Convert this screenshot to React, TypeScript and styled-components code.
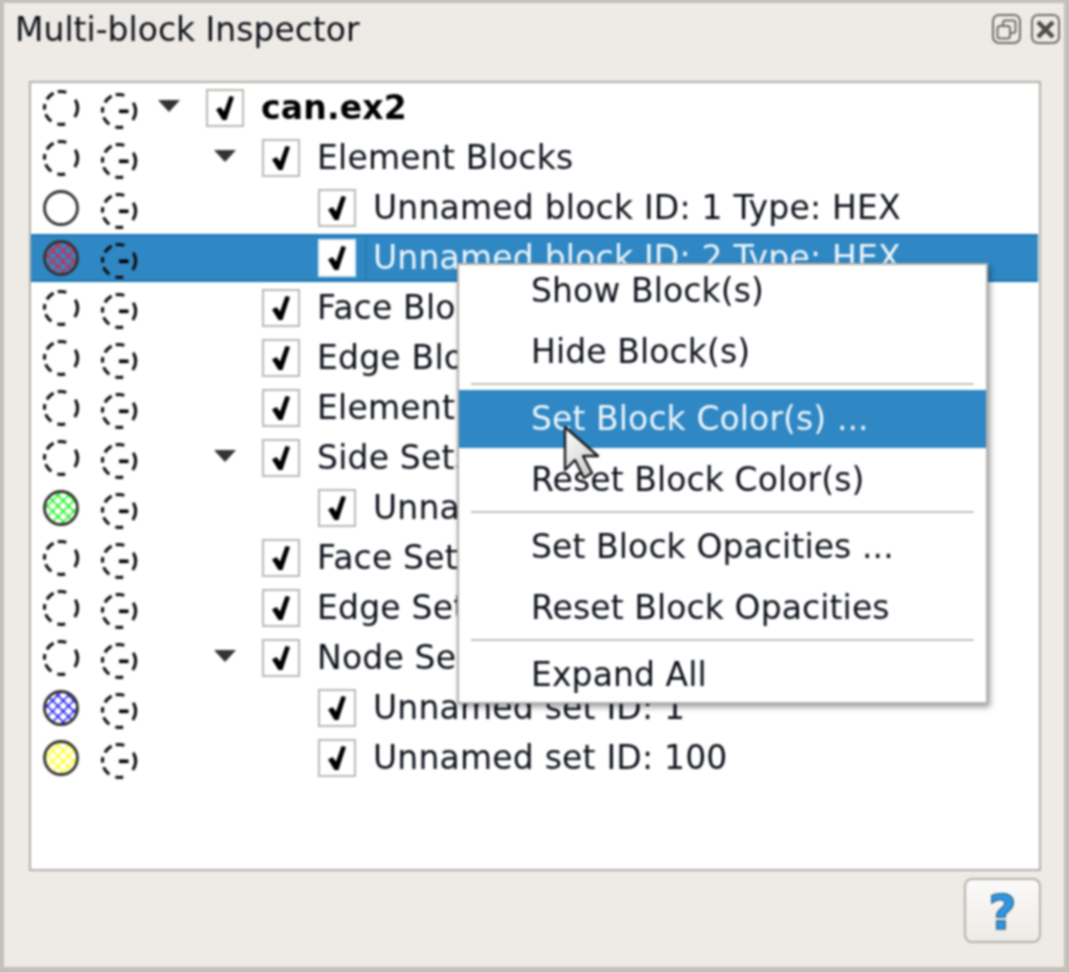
import React from "react";
import styled, { createGlobalStyle } from "styled-components";

const Global = createGlobalStyle`
  html, body { margin: 0; padding: 0; background: #c3c0ba; }
  body { font-family: "DejaVu Sans", sans-serif; }
  * { box-sizing: border-box; }
`;

const Page = styled.div`
  width: 1069px;
  height: 972px;
  overflow: hidden;
  background: #c3c0ba;
  filter: blur(0.8px);
`;

const Window = styled.div`
  position: relative;
  width: 1060px;
  height: 964px;
  margin-left: 4px;
  margin-top: 3px;
  background: #eeebe6;
  display: flex;
  flex-direction: column;
`;

const TitleBar = styled.div`
  height: 78px;
  flex: none;
  display: flex;
  align-items: flex-start;
  padding: 8px 4px 0 11px;
`;

const Title = styled.div`
  flex: 1;
  font-size: 33px;
  line-height: 38px;
  color: #0c1019;
`;

const TitleButtons = styled.div`
  display: flex;
  gap: 10px;
  padding-top: 3px;
`;

const TitleButton = styled.div`
  width: 29px;
  height: 30px;
  border: 2px solid #6f6d68;
  border-radius: 7px;
  display: flex;
  align-items: center;
  justify-content: center;
`;

const TreeFrame = styled.div`
  width: 1012px;
  height: 790px;
  margin-left: 25px;
  flex: none;
  border: 2px solid #b5b2ac;
  background: #fff;
`;

const Row = styled.div<{ $selected?: boolean }>`
  height: ${(p) => (p.$selected ? 48 : 50)}px;
  margin: ${(p) => (p.$selected ? "1px 1px 1px 0" : "0 1px 0 0")};
  display: flex;
  align-items: center;
  padding-left: 11px;
  background: ${(p) => (p.$selected ? "#2f87c3" : "transparent")};
  border-top: ${(p) => (p.$selected ? "2px solid #1c77b6" : "none")};
  border-bottom: ${(p) => (p.$selected ? "2px solid #1c77b6" : "none")};
`;

const IconSlot = styled.div<{ $gap?: number; $drop?: number }>`
  width: 38px;
  height: 38px;
  flex: none;
  margin-right: ${(p) => p.$gap ?? 0}px;
  margin-top: ${(p) => p.$drop ?? 0}px;
`;

const Indent = styled.div<{ $level: number }>`
  width: ${(p) => p.$level * 56}px;
  flex: none;
`;

const ArrowSlot = styled.div`
  width: 24px;
  height: 38px;
  margin-left: 19px;
  margin-right: 25px;
  flex: none;
  display: flex;
  align-items: center;
  padding-bottom: 4px;
`;

const Check = styled.div<{ $selected?: boolean }>`
  width: 38px;
  height: 38px;
  flex: none;
  background: #fff;
  border: 2px solid ${(p) => (p.$selected ? "#e6eef4" : "#bbb9b4")};
  display: flex;
  align-items: center;
  justify-content: center;
`;

const Label = styled.div<{ $bold?: boolean; $selected?: boolean }>`
  margin-left: ${(p) => (p.$selected ? 9 : 17)}px;
  padding-left: ${(p) => (p.$selected ? 6 : 0)}px;
  border-left: ${(p) => (p.$selected ? "2px solid #2a7db8" : "none")};
  font-size: 33px;
  letter-spacing: 0.2px;
  line-height: 44px;
  white-space: nowrap;
  font-weight: ${(p) => (p.$bold ? 700 : 400)};
  color: ${(p) => (p.$selected ? "#eef6fc" : p.$bold ? "#000" : "#0c1019")};
`;

const Footer = styled.div`
  flex: 1;
  display: flex;
  justify-content: flex-end;
  align-items: flex-start;
  padding: 7px 23px 0 0;
`;

const HelpButton = styled.div`
  width: 77px;
  height: 65px;
  border: 2px solid #b5b2ac;
  border-radius: 8px;
  background: linear-gradient(#fbfaf9, #eeebe6);
  display: flex;
  align-items: center;
  justify-content: center;
  padding-top: 3px;
  font-weight: 700;
  font-size: 48px;
  line-height: 1;
  color: #2f97e4;
  -webkit-text-stroke: 1.5px #3a6f98;
`;

const Menu = styled.div`
  position: absolute;
  left: 453px;
  top: 260px;
  width: 531px;
  height: 441px;
  background: #fff;
  border: 2px solid #b3b1ad;
  box-shadow: 2px 3px 6px rgba(0, 0, 0, 0.4);
`;

const MenuClip = styled.div`
  height: 100%;
  overflow: hidden;
  display: flex;
  flex-direction: column;
`;

const MenuItem = styled.div<{ $active?: boolean; $first?: boolean }>`
  height: ${(p) => (p.$first ? 55 : p.$active ? 58 : 60)}px;
  flex: none;
  margin-top: ${(p) => (p.$active ? 2 : 0)}px;
  margin-bottom: 1px;
  padding-left: 72px;
  padding-bottom: ${(p) => (p.$first ? 5 : p.$active ? 2 : 0)}px;
  display: flex;
  align-items: center;
  font-size: 33px;
  letter-spacing: 0.1px;
  white-space: nowrap;
  background: ${(p) => (p.$active ? "#2f87c3" : "transparent")};
  color: ${(p) => (p.$active ? "#eef6fc" : "#0c1019")};
`;

const Separator = styled.div`
  height: 2px;
  flex: none;
  margin: 1px 12px 3px;
  background: #c4c2bd;
`;

const Cursor = styled.svg`
  position: absolute;
  left: 558px;
  top: 422px;
  width: 44px;
  height: 60px;
`;

const DASHES = "18 12.2 7.8 6.6 9.2 4.6 5.5 5.2 9.2 4.3 8.6 12.4";

const Dashed = () => (
  <svg width="38" height="38" viewBox="0 0 38 38" fill="none">
    <circle cx="19" cy="19" r="16.5" stroke="#111" strokeWidth="3.1" strokeDasharray={DASHES} transform="rotate(-30 19 19)" />
  </svg>
);

const DashedMinus = () => (
  <svg width="38" height="38" viewBox="0 0 38 38" fill="none">
    <circle cx="19" cy="19" r="16.5" stroke="#111" strokeWidth="3.1" strokeDasharray={DASHES} transform="rotate(-30 19 19)" />
    <rect x="19" y="17.5" width="9.5" height="3.6" fill="#000" />
  </svg>
);

const Solid = ({ color, id }: { color?: string; id?: string }) => (
  <svg width="38" height="38" viewBox="0 0 38 38" fill="none">
    {color && (
      <defs>
        <pattern id={id} width="7.5" height="7.5" patternUnits="userSpaceOnUse" patternTransform="rotate(45)">
          <path d="M0 0H7.5M0 0V7.5" stroke={color} strokeWidth="2.6" />
        </pattern>
      </defs>
    )}
    {color && <circle cx="19" cy="19" r="16.5" fill={`url(#${id})`} />}
    <circle cx="19" cy="19" r="16.5" stroke="#333" strokeWidth="2.8" />
  </svg>
);

const Arrow = () => (
  <svg width="24" height="14" viewBox="0 0 24 14">
    <path d="M1 1H23L12 13Z" fill="#333" />
  </svg>
);

const CheckMark = () => (
  <svg width="18" height="24" viewBox="0 0 18 24">
    <path d="M0 13.5L4.5 11L8 15.5L13.5 0L18 1L10.5 24H6.5Z" fill="#000" />
  </svg>
);

type Item = {
  label: string;
  level: number;
  arrow?: boolean;
  bold?: boolean;
  selected?: boolean;
  color?: string;
  solid?: boolean;
};

const items: Item[] = [
  { label: "can.ex2", level: 0, arrow: true, bold: true },
  { label: "Element Blocks", level: 1, arrow: true },
  { label: "Unnamed block ID: 1 Type: HEX", level: 2, solid: true },
  { label: "Unnamed block ID: 2 Type: HEX", level: 2, selected: true, color: "#ff1030" },
  { label: "Face Blocks", level: 1 },
  { label: "Edge Blocks", level: 1 },
  { label: "Element Sets", level: 1 },
  { label: "Side Sets", level: 1, arrow: true },
  { label: "Unnamed set ID: 4", level: 2, color: "#00f000" },
  { label: "Face Sets", level: 1 },
  { label: "Edge Sets", level: 1 },
  { label: "Node Sets", level: 1, arrow: true },
  { label: "Unnamed set ID: 1", level: 2, color: "#0000f0" },
  { label: "Unnamed set ID: 100", level: 2, color: "#ffff00" },
];

export default function App() {
  return (
    <Page>
      <Global />
      <Window>
        <TitleBar>
          <Title>Multi-block Inspector</Title>
          <TitleButtons>
            <TitleButton>
              <svg width="21" height="21" viewBox="0 0 21 21" fill="none" stroke="#6f6d68" strokeWidth="2">
                <rect x="7" y="1.5" width="12.5" height="12.5" rx="2.5" />
                <rect x="1.5" y="7" width="12.5" height="12.5" rx="2.5" fill="#eeebe6" />
              </svg>
            </TitleButton>
            <TitleButton>
              <svg width="21" height="21" viewBox="0 0 21 21" fill="none" stroke="#4d4c49" strokeWidth="4.5">
                <path d="M3 3L18 18M18 3L3 18" />
              </svg>
            </TitleButton>
          </TitleButtons>
        </TitleBar>
        <TreeFrame>
          {items.map((it, i) => (
            <Row key={it.label} $selected={it.selected}>
              <IconSlot $gap={20}>
                {it.color ? <Solid color={it.color} id={`hatch${i}`} /> : it.solid ? <Solid /> : <Dashed />}
              </IconSlot>
              <IconSlot $drop={5}>
                <DashedMinus />
              </IconSlot>
              <Indent $level={it.level} />
              <ArrowSlot>{it.arrow && <Arrow />}</ArrowSlot>
              <Check $selected={it.selected}>
                <CheckMark />
              </Check>
              <Label $bold={it.bold} $selected={it.selected}>
                {it.label}
              </Label>
            </Row>
          ))}
        </TreeFrame>
        <Footer>
          <HelpButton>?</HelpButton>
        </Footer>
        <Menu>
          <MenuClip>
            <MenuItem $first>Show Block(s)</MenuItem>
            <MenuItem>Hide Block(s)</MenuItem>
            <Separator />
            <MenuItem $active>Set Block Color(s) ...</MenuItem>
            <MenuItem>Reset Block Color(s)</MenuItem>
            <Separator />
            <MenuItem>Set Block Opacities ...</MenuItem>
            <MenuItem>Reset Block Opacities</MenuItem>
            <Separator />
            <MenuItem>Expand All</MenuItem>
          </MenuClip>
        </Menu>
        <Cursor viewBox="0 0 44 60">
          <defs>
            <linearGradient id="cur" x1="0" y1="0" x2="0.6" y2="1">
              <stop offset="0" stopColor="#ffffff" />
              <stop offset="1" stopColor="#cfcfcf" />
            </linearGradient>
          </defs>
          <path d="M3 2V45L13 35L22 53L30 48L21 31H36Z" fill="url(#cur)" stroke="#1a1a1a" strokeWidth="2.4" strokeLinejoin="round" />
        </Cursor>
      </Window>
    </Page>
  );
}
